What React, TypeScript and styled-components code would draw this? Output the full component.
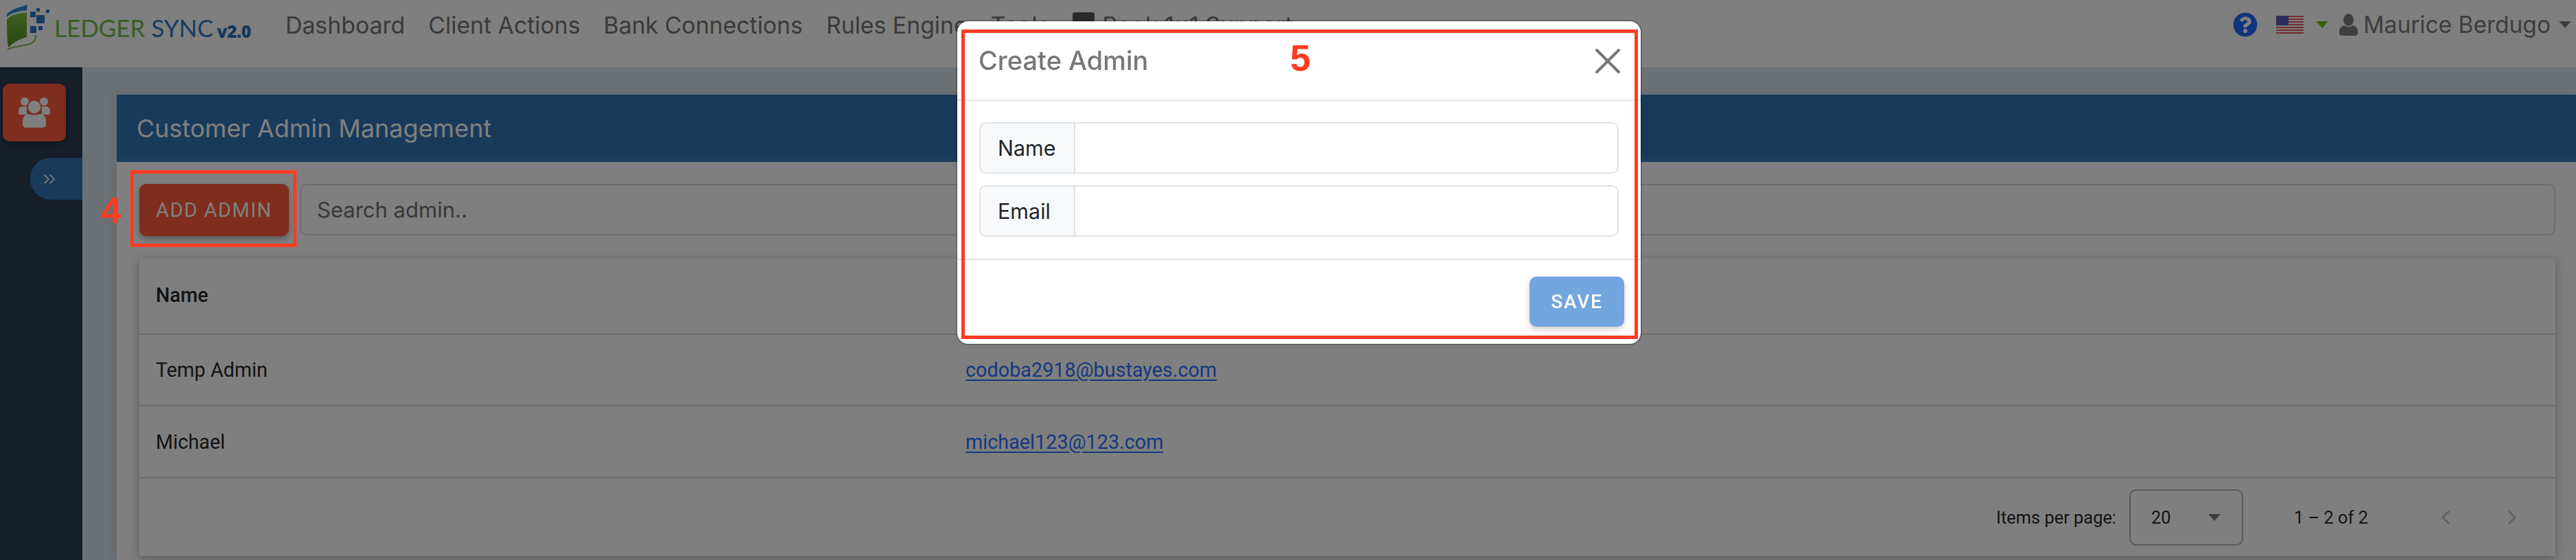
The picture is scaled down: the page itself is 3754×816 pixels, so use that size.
import React from "react";
import styled, { createGlobalStyle } from "styled-components";
import { FaQuestionCircle } from "react-icons/fa";
import { ChevronLeft, ChevronRight, ChevronsRight, X } from "lucide-react";

const Global = createGlobalStyle`
  html, body { margin: 0; padding: 0; background: #fff; }
  body { font-family: Inter, "Liberation Sans", sans-serif; }
  * { box-sizing: border-box; }
`;

const Page = styled.div`
  width: 3754px;
  height: 816px;
  overflow: hidden;
  display: flex;
  flex-direction: column;
  background: #fff;
`;

const TopNav = styled.header`
  height: 98px;
  flex: none;
  display: flex;
  align-items: flex-start;
  padding: 6px 7px 0 9px;
  background: #fff;
`;

const Logo = styled.div`
  width: 407px;
  display: flex;
  align-items: flex-start;
`;

const LogoWord = styled.span<{ $color: string; $ml: number }>`
  font-family: Lato, sans-serif;
  font-weight: 400;
  font-size: 35px;
  line-height: 42px;
  margin-top: 13px;
  margin-left: ${(p) => p.$ml}px;
  color: ${(p) => p.$color};
`;

const LogoVersion = styled.span`
  font-family: "Open Sans", sans-serif;
  font-weight: 800;
  font-size: 25px;
  line-height: 30px;
  margin: 24px 0 0 5px;
  color: #2a6fbe;
  letter-spacing: -0.5px;
`;

const NavLinks = styled.nav`
  display: flex;
  align-items: center;
  gap: 34px;
  height: 60px;
`;

const NavLink = styled.a`
  display: flex;
  align-items: center;
  gap: 11px;
  font-size: 33.8px;
  color: #747474;
  white-space: nowrap;
`;

const NavRight = styled.div`
  margin-left: auto;
  height: 60px;
  display: flex;
  align-items: center;
`;

const HelpIcon = styled(FaQuestionCircle)`
  width: 36px;
  height: 36px;
  color: #2069fa;
  margin-right: 27px;
`;

const Caret = styled.span<{ $color: string; $ml: number; $mr: number }>`
  width: 0;
  height: 0;
  border-left: 9px solid transparent;
  border-right: 9px solid transparent;
  border-top: 10px solid ${(p) => p.$color};
  margin-left: ${(p) => p.$ml}px;
  margin-right: ${(p) => p.$mr}px;
`;

const UserName = styled.span`
  font-size: 33.5px;
  color: #7c7c7c;
  margin-left: 8px;
  white-space: nowrap;
`;

const Body = styled.div`
  flex: 1;
  display: flex;
  min-height: 0;
`;

const Sidebar = styled.aside`
  width: 120px;
  flex: none;
  background: #2d3d53;
  padding: 24px 0 0 4px;
  display: flex;
  flex-direction: column;
  align-items: flex-start;
`;

const SideButton = styled.div`
  width: 92px;
  height: 84px;
  border-radius: 10px;
  background: #fe5c3c;
  display: flex;
  align-items: center;
  justify-content: center;
  box-shadow: 0 4px 8px rgba(0, 0, 0, 0.35);
`;

const SidePill = styled.div`
  margin: 24px 0 0 40px;
  width: 76px;
  height: 61px;
  border-radius: 30px 0 0 30px;
  background: #3274b4;
  display: flex;
  align-items: center;
  padding-left: 14px;
  color: #fff;
`;

const Main = styled.main`
  flex: 1;
  min-width: 0;
  background: #d8e2ea;
  padding: 40px 0 0 50px;
`;

const Panel = styled.section`
  height: 100%;
  background: #fff;
  box-shadow: -6px 0 14px rgba(0, 0, 0, 0.06);
`;

const PanelHeader = styled.div`
  height: 98px;
  display: flex;
  align-items: center;
  padding-left: 29px;
  background: linear-gradient(to bottom, #3274b4 85%, #3d7cb8 100%);
  color: #fff;
  font-size: 36px;
`;

const PanelBody = styled.div`
  padding: 32px 30px 0 33px;
`;

const Toolbar = styled.div`
  display: flex;
  gap: 16px;
  margin-bottom: 32px;
`;

const AddButton = styled.button`
  width: 218px;
  height: 76px;
  flex: none;
  border: 0;
  border-radius: 10px;
  background: #fe5c3c;
  color: #fff;
  font-family: Roboto, sans-serif;
  font-weight: 400;
  font-size: 29px;
  letter-spacing: 1.5px;
  box-shadow: 0 4px 8px rgba(0, 0, 0, 0.3);
`;

const SearchBox = styled.div`
  flex: 1;
  height: 75px;
  border: 2px solid #dcdcdc;
  border-radius: 10px;
  display: flex;
  align-items: center;
  padding-left: 23px;
  font-size: 31px;
  color: #707070;
`;

const Card = styled.div`
  background: #fff;
  box-shadow: 0 4px 14px rgba(0, 0, 0, 0.3);
  font-family: Roboto, sans-serif;
`;

const Row = styled.div<{ $h: number; $strong?: boolean }>`
  height: ${(p) => p.$h}px;
  display: grid;
  grid-template-columns: 1180px 1fr;
  align-items: center;
  padding-left: 24px;
  padding-bottom: ${(p) => (p.$strong ? 2 : 0)}px;
  border-bottom: 2px solid #dadada;
  font-size: 28.8px;
  font-weight: ${(p) => (p.$strong ? 500 : 400)};
  color: rgba(0, 0, 0, 0.87);
`;

const EmailLink = styled.a`
  color: #2a72fe;
  text-decoration: underline;
  text-underline-offset: 4px;
`;

const TableFooter = styled.div`
  height: 113px;
  display: flex;
  align-items: center;
  justify-content: flex-end;
  font-size: 25.4px;
  color: rgba(0, 0, 0, 0.87);
  padding-right: 46px;
`;

const PageSelect = styled.div`
  width: 166px;
  height: 82px;
  margin-left: 19px;
  border: 2px solid #b4b4b4;
  border-radius: 10px;
  display: flex;
  align-items: center;
  justify-content: space-between;
  padding: 0 31px 0 30px;
`;

const RangeLabel = styled.span`
  margin: 0 96px 0 74px;
`;

const PagerIcon = styled.span<{ $ml?: number }>`
  display: flex;
  margin-left: ${(p) => p.$ml ?? 0}px;
  color: #c4c4c4;
`;

const Backdrop = styled.div`
  position: fixed;
  inset: 0;
  background: rgba(0, 0, 0, 0.5);
  z-index: 10;
`;

const Modal = styled.div`
  position: fixed;
  left: 1395px;
  top: 31px;
  width: 996px;
  height: 470px;
  background: #fff;
  border-radius: 16px;
  box-shadow: 0 0 0 2px rgba(0, 0, 0, 0.2);
  z-index: 20;
  display: flex;
  flex-direction: column;
`;

const ModalHeader = styled.div`
  height: 116px;
  flex: none;
  border-bottom: 2px solid #dee2e6;
  display: flex;
  justify-content: space-between;
  padding: 33px 32px 0 31px;
  color: #777;
`;

const ModalTitle = styled.h5`
  margin: 0;
  font-size: 38px;
  line-height: 48px;
  font-weight: 500;
`;

const CloseIcon = styled(X)`
  width: 64px;
  height: 64px;
  margin: -7px -16px 0 0;
  color: #777;
`;

const ModalBody = styled.div`
  height: 232px;
  flex: none;
  border-bottom: 2px solid #dee2e6;
  padding: 31px 32px 0 32px;
  display: flex;
  flex-direction: column;
  gap: 17px;
`;

const InputGroup = styled.div`
  height: 75px;
  display: flex;
  border: 2px solid #dee2e6;
  border-radius: 10px;
  overflow: hidden;
`;

const InputAddon = styled.label`
  width: 138px;
  flex: none;
  display: flex;
  align-items: center;
  padding-left: 25px;
  background: #f8f9fa;
  border-right: 2px solid #dee2e6;
  font-size: 30.5px;
  color: #212529;
`;

const TextInput = styled.input`
  flex: 1;
  min-width: 0;
  border: 0;
  outline: 0;
  background: #fff;
`;

const ModalFooter = styled.div`
  flex: 1;
  display: flex;
  justify-content: flex-end;
  padding: 24px 24px 0 0;
`;

const SaveButton = styled.button`
  width: 138px;
  height: 73px;
  border: 0;
  border-radius: 10px;
  background: #73a5de;
  color: #fff;
  font-family: Roboto, sans-serif;
  font-weight: 500;
  font-size: 28px;
  letter-spacing: 1.8px;
  box-shadow: 0 4px 8px rgba(0, 0, 0, 0.2);
`;

const RedBox = styled.div`
  position: fixed;
  border: 5px solid #ff3b20;
  z-index: 30;
  pointer-events: none;
`;

const AddBox = styled(RedBox)`
  left: 190px;
  top: 248px;
  width: 242px;
  height: 112px;
`;

const ModalBox = styled(RedBox)`
  left: 1401px;
  top: 43px;
  width: 986px;
  height: 451px;
`;

const StepNumber = styled.span<{ $left: number; $top: number }>`
  position: fixed;
  left: ${(p) => p.$left}px;
  top: ${(p) => p.$top}px;
  z-index: 30;
  font-family: "Liberation Sans", sans-serif;
  font-weight: 700;
  font-size: 54px;
  line-height: 60px;
  color: #ff3b20;
`;

const LogoMark = () => (
  <svg width="64" height="68" viewBox="0 0 64 68" fill="none">
    <defs>
      <linearGradient id="leaf" x1="0" y1="0" x2="0" y2="1">
        <stop offset="0" stopColor="#7cc046" />
        <stop offset="1" stopColor="#4d8f1c" />
      </linearGradient>
    </defs>
    <path d="M1 16 C3 9 20 4 31 1 L30 9 C18 10 6 13 1 19 Z" fill="#2f87d8" />
    <path d="M1 22 C6 16 18 13 30 12 L30 48 C22 50 10 55 4 63 C2 60 1 50 1 22 Z" fill="url(#leaf)" />
    <path d="M43 45 C44 54 38 58 26 60 C14 62 6 63 2 66" stroke="#8fc46a" strokeWidth="2.5" />
    <g fill="#2478c8">
      <rect x="35" y="11" width="8" height="8" rx="1" />
      <rect x="44" y="6" width="5" height="5" rx="1" />
      <rect x="58" y="8" width="5" height="5" rx="1" />
      <rect x="44" y="16" width="12" height="12" rx="1" />
      <rect x="35" y="32" width="9" height="10" rx="1" />
      <rect x="47" y="32" width="6" height="6" rx="1" />
    </g>
  </svg>
);

const BookMark = () => (
  <svg width="32" height="36" viewBox="0 0 32 36">
    <rect width="32" height="36" rx="3" fill="#555" />
  </svg>
);

const FlagUS = () => (
  <svg width="40" height="26" viewBox="0 0 40 26">
    <rect width="40" height="26" fill="#fff" />
    {[0, 4, 8, 12, 16, 20, 24].map((y) => (
      <rect key={y} y={y} width="40" height="2" fill="#e0585c" />
    ))}
    <rect width="18" height="14" fill="#5a5ab8" />
  </svg>
);

const UserGlyph = () => (
  <svg width="27" height="32" viewBox="0 0 27 32" fill="#7c7c7c">
    <ellipse cx="13.5" cy="9" rx="7.5" ry="9" />
    <path d="M8 17 C10 20 17 20 19 17 C24 18 27 21 27 25 L27 28 C27 31 25 32 23 32 L4 32 C2 32 0 31 0 28 L0 25 C0 21 3 18 8 17 Z" />
  </svg>
);

const UsersGlyph = () => (
  <svg width="48" height="46" viewBox="0 0 48 46" fill="#fff">
    <circle cx="10" cy="7" r="6" />
    <circle cx="38" cy="7" r="6" />
    <path d="M1 21 C1 16 4 14 8 14 L13 14 L13 26 L3 26 C1 26 1 24 1 21 Z" />
    <path d="M47 21 C47 16 44 14 40 14 L35 14 L35 26 L45 26 C47 26 47 24 47 21 Z" />
    <circle cx="24" cy="15" r="10" stroke="#fe5c3c" strokeWidth="1.5" />
    <path d="M7 35 C7 28 12 25 16 25 C19 27 29 27 32 25 C36 25 41 28 41 35 L41 40 C41 44 38 45 36 45 L12 45 C10 45 7 44 7 40 Z" />
  </svg>
);

export default function App() {
  return (
    <Page>
      <Global />
      <TopNav>
        <Logo>
          <LogoMark />
          <LogoWord $color="#6ebc46" $ml={6}>LEDGER</LogoWord>
          <LogoWord $color="#2f78c8" $ml={9}>SYNC</LogoWord>
          <LogoVersion>v2.0</LogoVersion>
        </Logo>
        <NavLinks>
          <NavLink>Dashboard</NavLink>
          <NavLink>Client Actions</NavLink>
          <NavLink>Bank Connections</NavLink>
          <NavLink>Rules Engine</NavLink>
          <NavLink>Tools</NavLink>
          <NavLink>
            <BookMark />
            Book 1x1 Support
          </NavLink>
        </NavLinks>
        <NavRight>
          <HelpIcon />
          <FlagUS />
          <Caret $color="#6cbf2c" $ml={18} $mr={16} />
          <UserGlyph />
          <UserName>Maurice Berdugo</UserName>
          <Caret $color="#7c7c7c" $ml={12} $mr={0} />
        </NavRight>
      </TopNav>
      <Body>
        <Sidebar>
          <SideButton>
            <UsersGlyph />
          </SideButton>
          <SidePill>
            <ChevronsRight size={28} strokeWidth={1.5} />
          </SidePill>
        </Sidebar>
        <Main>
          <Panel>
            <PanelHeader>Customer Admin Management</PanelHeader>
            <PanelBody>
              <Toolbar>
                <AddButton>ADD ADMIN</AddButton>
                <SearchBox>Search admin..</SearchBox>
              </Toolbar>
              <Card>
                <Row $h={112} $strong>
                  <span>Name</span>
                  <span>Email</span>
                </Row>
                <Row $h={104}>
                  <span>Temp Admin</span>
                  <EmailLink>codoba2918@bustayes.com</EmailLink>
                </Row>
                <Row $h={105}>
                  <span>Michael</span>
                  <EmailLink>michael123@123.com</EmailLink>
                </Row>
                <TableFooter>
                  <span>Items per page:</span>
                  <PageSelect>
                    <span>20</span>
                    <Caret $color="#7a7a7a" $ml={0} $mr={0} />
                  </PageSelect>
                  <RangeLabel>1 – 2 of 2</RangeLabel>
                  <PagerIcon>
                    <ChevronLeft size={34} strokeWidth={2} />
                  </PagerIcon>
                  <PagerIcon $ml={63}>
                    <ChevronRight size={34} strokeWidth={2} />
                  </PagerIcon>
                </TableFooter>
              </Card>
            </PanelBody>
          </Panel>
        </Main>
      </Body>
      <Backdrop />
      <Modal>
        <ModalHeader>
          <ModalTitle>Create Admin</ModalTitle>
          <CloseIcon strokeWidth={1.5} />
        </ModalHeader>
        <ModalBody>
          <InputGroup>
            <InputAddon>Name</InputAddon>
            <TextInput />
          </InputGroup>
          <InputGroup>
            <InputAddon>Email</InputAddon>
            <TextInput />
          </InputGroup>
        </ModalBody>
        <ModalFooter>
          <SaveButton>SAVE</SaveButton>
        </ModalFooter>
      </Modal>
      <AddBox />
      <ModalBox />
      <StepNumber $left={147} $top={276}>4</StepNumber>
      <StepNumber $left={1880} $top={54}>5</StepNumber>
    </Page>
  );
}
